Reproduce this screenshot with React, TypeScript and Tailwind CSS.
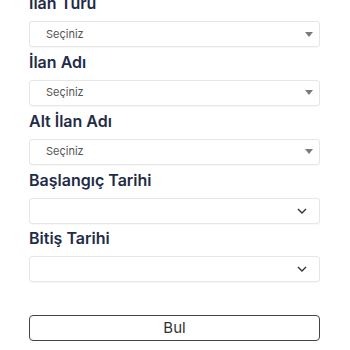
import React from "react";

const font = { fontFamily: 'Inter, "Noto Sans", sans-serif' };

function Label({ children }: { children: React.ReactNode }) {
  return (
    <div className="h-[24px] text-[16px] leading-[24px] font-semibold text-[#1f2b48] mb-[6px]">
      {children}
    </div>
  );
}

function SelectBox() {
  return (
    <div className="h-[26px] rounded-[3px] border border-[#e6e6e6] bg-white flex items-center pl-[16px] pr-[6px] shadow-[0_1px_1px_rgba(0,0,0,0.03)]">
      <span className="flex-1 text-[11px] text-[#555555]">Seçiniz</span>
      <svg width="8" height="5" viewBox="0 0 8 5">
        <path d="M0 0 L8 0 L4 5 Z" fill="#7a7a7a" />
      </svg>
    </div>
  );
}

function DateBox() {
  return (
    <div className="h-[26px] rounded-[3px] border border-[#e6e6e6] bg-white flex items-center justify-end pr-[12px] shadow-[0_1px_1px_rgba(0,0,0,0.03)]">
      <svg width="10" height="6" viewBox="0 0 10 6">
        <path d="M1 1 L5 5 L9 1" fill="none" stroke="#333" strokeWidth="1.4" />
      </svg>
    </div>
  );
}

export default function App() {
  return (
    <div className="w-[350px] h-[350px] overflow-hidden bg-white" style={font}>
      <div className="pl-[29px] pr-[30px] mt-[-9px] flex flex-col">
        <Label>İlan Türü</Label>
        <SelectBox />
        <div className="h-[2.5px]" />
        <Label>İlan Adı</Label>
        <SelectBox />
        <div className="h-[3px]" />
        <Label>Alt İlan Adı</Label>
        <SelectBox />
        <div className="h-[3px]" />
        <Label>Başlangıç Tarihi</Label>
        <DateBox />
        <div className="h-[2.5px]" />
        <Label>Bitiş Tarihi</Label>
        <DateBox />
        <button className="mt-[33px] h-[26px] rounded-[4px] border border-[#444] bg-white text-[15px] text-[#333] flex items-center justify-center">
          Bul
        </button>
      </div>
    </div>
  );
}
